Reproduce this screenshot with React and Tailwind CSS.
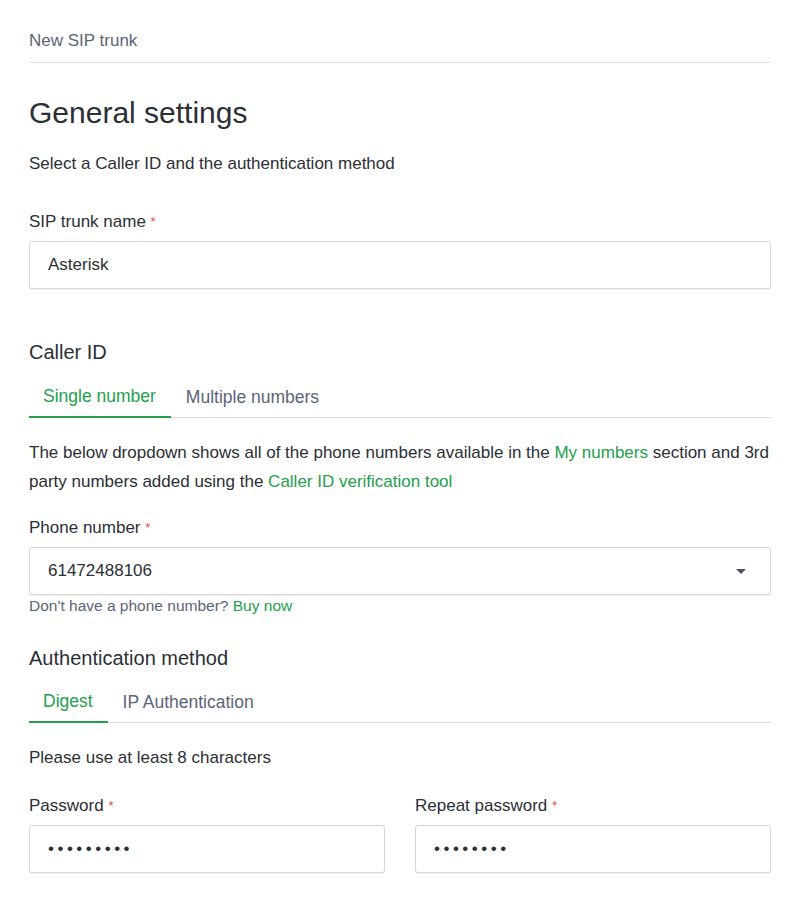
import { useState } from 'react';

function Label({ children }) {
  return (
    <div className="text-[17px] text-[#2b2f36] leading-6 mb-[7px]">
      {children} <span className="text-[#e5484d] text-[13px] align-top">*</span>
    </div>
  );
}

function Tabs({ items, active }) {
  return (
    <div className="flex border-b border-[#d8dbe0] h-[41px]">
      {items.map((t, i) => (
        <div
          key={t}
          className={
            i === active
              ? 'pl-[14px] pr-[15px] flex items-center text-[17.5px] text-[#22a04b] border-b-2 border-[#22a04b] -mb-px'
              : 'px-[15px] flex items-center text-[17.5px] text-[#5b6478]'
          }
        >
          {t}
        </div>
      ))}
    </div>
  );
}

export default function App() {
  const [name, setName] = useState('Asterisk');
  const input =
    'w-full h-[48px] px-[18px] border border-[#d3d6de] rounded-[3px] text-[17px] text-[#2b2f36] bg-white shadow-[0_1px_1px_rgba(0,0,0,0.06)] outline-none';

  return (
    <div className="bg-white min-h-[901px] px-[29px] text-[#2b2f36]" style={{ fontFamily: '"Liberation Sans", Arial, sans-serif' }}>
      <div className="pt-[31px] pb-[11px] border-b border-[#e4e6ea] text-[17px] text-[#5b6478] leading-5">New SIP trunk</div>

      <h1 className="mt-[32px] text-[30px] leading-9 text-[#2b2f36]">General settings</h1>
      <p className="mt-[21px] text-[17px] leading-6">Select a Caller ID and the authentication method</p>

      <div className="mt-[34px]">
        <Label>SIP trunk name</Label>
        <input className={input} value={name} onChange={(e) => setName(e.target.value)} />
      </div>

      <h2 className="mt-[51px] text-[20px] leading-6">Caller ID</h2>
      <div className="mt-[13px]">
        <Tabs items={['Single number', 'Multiple numbers']} active={0} />
      </div>

      <p className="mt-[20px] text-[17px] leading-[29px]">
        The below dropdown shows all of the phone numbers available in the{' '}
        <span className="text-[#22a04b]">My numbers</span> section and 3rd party numbers added using the{' '}
        <span className="text-[#22a04b]">Caller ID verification tool</span>
      </p>

      <div className="mt-[20px]">
        <Label>Phone number</Label>
        <div className={input + ' flex items-center justify-between'}>
          <span>61472488106</span>
          <svg width="12" height="12" viewBox="0 0 12 12" className="mr-[5px]">
            <polygon points="1,4 11,4 6,9" fill="#4b5263" />
          </svg>
        </div>
        <div className="mt-[1px] text-[15.5px] leading-5 text-[#5b6478]">
          Don't have a phone number? <span className="text-[#22a04b]">Buy now</span>
        </div>
      </div>

      <h2 className="mt-[30px] text-[20px] leading-6">Authentication method</h2>
      <div className="mt-[12px]">
        <Tabs items={['Digest', 'IP Authentication']} active={0} />
      </div>

      <p className="mt-[23px] text-[17px] leading-6">Please use at least 8 characters</p>

      <div className="mt-[24px] grid grid-cols-2 gap-[30px]">
        <div>
          <Label>Password</Label>
          <div className={input + ' flex items-center tracking-[3.5px] text-[15px]'}>•••••••••</div>
        </div>
        <div>
          <Label>Repeat password</Label>
          <div className={input + ' flex items-center tracking-[3.5px] text-[15px]'}>••••••••</div>
        </div>
      </div>
    </div>
  );
}
